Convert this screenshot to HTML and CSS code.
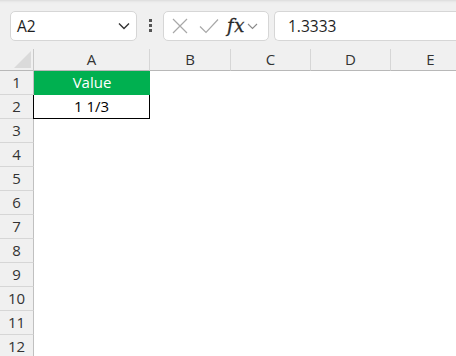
FILE: index.html
```html
<!DOCTYPE html>
<html>
<head>
<meta charset="utf-8">
<link rel="stylesheet" href="styles.css">
</head>
<body>
<div class="app">
  <div class="toolbar">
    <div class="namebox">
      <span class="name">A2</span>
      <svg class="chev" width="12" height="8" viewBox="0 0 12 8"><path d="M1 1.5 L6 6.5 L11 1.5" fill="none" stroke="#333" stroke-width="1.4"/></svg>
    </div>
    <div class="dots"><i></i><i></i><i></i></div>
    <div class="fxbox">
      <svg class="ico" width="18" height="18" viewBox="0 0 18 18"><path d="M2 2 L16 16 M16 2 L2 16" stroke="#a8a8a8" stroke-width="1.2" fill="none"/></svg>
      <svg class="ico" width="22" height="18" viewBox="0 0 22 18"><path d="M2 9.5 L8 15.5 L20 2.5" stroke="#a8a8a8" stroke-width="1.2" fill="none"/></svg>
      <span class="fx">fx</span>
      <svg class="chev2" width="11" height="7" viewBox="0 0 11 7"><path d="M1 1 L5.5 5.5 L10 1" fill="none" stroke="#8a8a8a" stroke-width="1.1"/></svg>
    </div>
    <div class="formula">1.3333</div>
  </div>
  <div class="sheet">
    <div class="corner"><svg width="17" height="17" viewBox="0 0 17 17"><path d="M0 17 L17 0 L17 17 Z" fill="#dadada"/></svg></div>
    <div class="colh">A</div>
    <div class="colh">B</div>
    <div class="colh">C</div>
    <div class="colh">D</div>
    <div class="colh">E</div>

    <div class="rowh">1</div><div class="cell head">Value</div><div class="cell"></div><div class="cell"></div><div class="cell"></div><div class="cell"></div>
    <div class="rowh">2</div><div class="cell val">1 1/3</div><div class="cell"></div><div class="cell"></div><div class="cell"></div><div class="cell"></div>
    <div class="rowh">3</div><div class="cell"></div><div class="cell"></div><div class="cell"></div><div class="cell"></div><div class="cell"></div>
    <div class="rowh">4</div><div class="cell"></div><div class="cell"></div><div class="cell"></div><div class="cell"></div><div class="cell"></div>
    <div class="rowh">5</div><div class="cell"></div><div class="cell"></div><div class="cell"></div><div class="cell"></div><div class="cell"></div>
    <div class="rowh">6</div><div class="cell"></div><div class="cell"></div><div class="cell"></div><div class="cell"></div><div class="cell"></div>
    <div class="rowh">7</div><div class="cell"></div><div class="cell"></div><div class="cell"></div><div class="cell"></div><div class="cell"></div>
    <div class="rowh">8</div><div class="cell"></div><div class="cell"></div><div class="cell"></div><div class="cell"></div><div class="cell"></div>
    <div class="rowh">9</div><div class="cell"></div><div class="cell"></div><div class="cell"></div><div class="cell"></div><div class="cell"></div>
    <div class="rowh">10</div><div class="cell"></div><div class="cell"></div><div class="cell"></div><div class="cell"></div><div class="cell"></div>
    <div class="rowh">11</div><div class="cell"></div><div class="cell"></div><div class="cell"></div><div class="cell"></div><div class="cell"></div>
    <div class="rowh">12</div><div class="cell"></div><div class="cell"></div><div class="cell"></div><div class="cell"></div><div class="cell"></div>
  </div>
</div>
</body>
</html>
```
FILE: styles.css
```css
* { box-sizing: border-box; }
html, body { margin: 0; padding: 0; }
body {
  width: 456px;
  height: 356px;
  overflow: hidden;
  background: #f0f0f0;
  font-family: "Open Sans", "Noto Sans", sans-serif;
  color: #222;
}
.app { width: 456px; height: 356px; overflow: hidden; }
.toolbar {
  height: 49px;
  display: flex;
  align-items: center;
  padding: 2px 0 0 10px;
  background: linear-gradient(#dcdcdc 0, #ececec 2px, #f0f0f0 4px);
}
.namebox {
  width: 127px;
  height: 30px;
  background: #fff;
  border: 1px solid #d6d6d6;
  border-radius: 5px;
  display: flex;
  align-items: center;
  justify-content: space-between;
  padding: 0 6px 0 6px;
}
.name { font-size: 15.5px; color: #1e1e1e; }
.chev { margin-top: 1px; }
.dots {
  width: 26px;
  display: flex;
  flex-direction: column;
  align-items: center;
  gap: 2px;
}
.dots i { display: block; width: 3px; height: 3px; background: #555; }
.fxbox {
  width: 106px;
  height: 30px;
  background: #fff;
  border: 1px solid #d6d6d6;
  border-radius: 5px;
  display: flex;
  align-items: center;
  padding: 0 0 0 7px;
}
.fxbox .ico:first-child { margin-right: 9px; }
.fx {
  font-family: "DejaVu Serif", "Liberation Serif", serif;
  font-style: italic;
  font-size: 18px;
  color: #2a2a2a;
  margin-left: 7px;
  letter-spacing: 0.5px;
  -webkit-text-stroke: 0.3px #2a2a2a;
}
.chev2 { margin-left: 2px; margin-top: 2px; }
.formula {
  margin-left: 5px;
  flex: 1;
  height: 30px;
  background: #fff;
  border: 1px solid #d6d6d6;
  border-right: none;
  border-radius: 5px 0 0 5px;
  font-size: 15.5px;
  line-height: 28px;
  padding-left: 13px;
  color: #1e1e1e;
}
.sheet {
  display: grid;
  grid-template-columns: 34px 116px 81px 80px 80px 80px;
  grid-template-rows: 22px repeat(12, 24px);
  background: #fff;
}
.corner {
  background: #f0f0f0;
  border-right: 1px solid #c8c8c8;
  border-bottom: 1px solid #b8b8b8;
  display: flex;
  align-items: flex-end;
  justify-content: flex-end;
  padding: 0 2px 2px 0;
}
.corner svg { display: block; }
.colh {
  background: #f0f0f0;
  border-right: 1px solid #d6d6d6;
  border-bottom: 1px solid #b8b8b8;
  text-align: center;
  font-size: 15px;
  line-height: 21px;
  color: #333;
}
.rowh {
  background: #f0f0f0;
  border-right: 1px solid #c0c0c0;
  border-bottom: 1px solid #d6d6d6;
  text-align: center;
  font-size: 15px;
  line-height: 23px;
  color: #333;
}
.cell { background: #fff; }
.cell.head {
  background: #00b050;
  color: #fff;
  text-align: center;
  font-size: 15px;
  line-height: 23px;
  border-bottom: 1px solid #00b050;
}
.cell.val {
  margin-left: -1px;
  border-left: 1px solid #000;
  border-right: 1px solid #000;
  border-bottom: 1px solid #000;
  text-align: center;
  font-size: 15px;
  line-height: 23px;
  color: #000;
}
```
